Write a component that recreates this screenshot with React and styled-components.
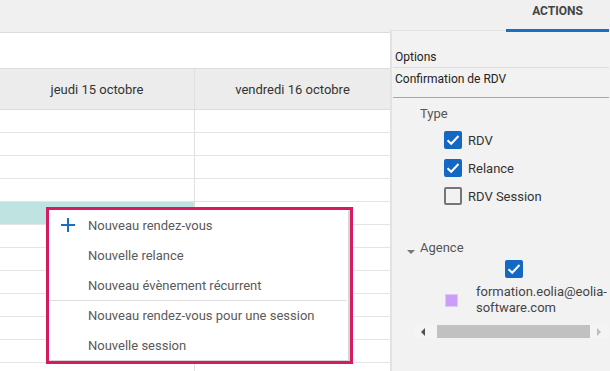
import React from "react";
import styled, { createGlobalStyle } from "styled-components";

const Global = createGlobalStyle`
  html, body { margin: 0; padding: 0; }
  body { width: 610px; height: 371px; overflow: hidden; background: #f2f2f2; font-family: Roboto, "Liberation Sans", Arial, sans-serif; }
  * { box-sizing: border-box; }
`;

const Page = styled.div`
  display: flex;
  width: 610px;
  height: 371px;
  overflow: hidden;
`;

const Calendar = styled.div`
  position: relative;
  width: 390px;
  flex: none;
  display: flex;
  flex-direction: column;
  background: #fff;
  overflow: hidden;
`;

const Toolbar = styled.div`
  height: 33px;
  flex: none;
  background: #f0f0f0;
  border-bottom: 1px solid #dcdcdc;
`;

const Spacer = styled.div`
  height: 35px;
  flex: none;
  background: #fff;
`;

const Row = styled.div`
  display: grid;
  grid-template-columns: 195px 195px;
  height: ${(p) => (p.$header ? "42px" : "23px")};
  flex: none;
  background: ${(p) => (p.$header ? "#ececec" : "#fff")};
  border-top: ${(p) => (p.$header ? "1px solid #dcdcdc" : "none")};
  border-bottom: 1px solid ${(p) => (p.$header ? "#dcdcdc" : "#e4e4e4")};
`;

const Cell = styled.div`
  display: flex;
  align-items: center;
  justify-content: center;
  font-size: 13px;
  color: #333;
  background: ${(p) => (p.$selected ? "#bfe3e0" : "transparent")};
  border-right: ${(p) => (p.$first ? "1px solid #e0e0e0" : "none")};
`;

const Menu = styled.div`
  position: absolute;
  left: 46px;
  top: 207px;
  width: 307px;
  height: 157px;
  border: 3px solid #d81b60;
  background: #fff;
  display: flex;
  flex-direction: column;
  box-shadow: inset -2px -1px 0 #d6d6d6;
`;

const MenuItem = styled.div`
  height: 30px;
  flex: none;
  display: flex;
  align-items: center;
  padding-left: 12px;
  gap: 13px;
  font-size: 13px;
  color: #5a5a5a;
  border-top: ${(p) => (p.$divided ? "1px solid #dedede" : "none")};
  margin-right: 3px;
`;

const IconSlot = styled.span`
  width: 14px;
  height: 14px;
  flex: none;
  display: flex;
`;

const Sidebar = styled.div`
  flex: 1;
  display: flex;
  flex-direction: column;
  background: #f2f2f2;
`;

const TabBar = styled.div`
  height: 31px;
  flex: none;
  display: flex;
  justify-content: flex-end;
  padding-right: 4px;
  border-bottom: 1px solid #e2e2e2;
  background: #f0f0f0;
`;

const Tab = styled.div`
  width: 103px;
  height: 32px;
  display: flex;
  justify-content: center;
  padding-top: 4px;
  font-size: 12px;
  font-weight: 700;
  color: #444;
  border-bottom: 3px solid #1a6fc4;
  margin-bottom: -1px;
`;

const Body = styled.div`
  flex: 1;
  border-left: 2px solid #e2e2e2;
  padding: 16px 4px 0 1px;
  display: flex;
  flex-direction: column;
`;

const OptionLine = styled.div`
  height: 21px;
  flex: none;
  display: flex;
  align-items: center;
  padding-left: 2px;
  font-size: 12px;
  color: #222;
  border-bottom: ${(p) => (p.$last ? "none" : "1px solid #dcdcdc")};
`;

const Rule = styled.div`
  margin-top: 8px;
  border-top: 1px solid #a8a8a8;
`;

const GroupTitle = styled.div`
  display: flex;
  align-items: center;
  gap: 5px;
  height: 16px;
  flex: none;
  margin-top: ${(p) => p.$mt}px;
  margin-bottom: ${(p) => p.$mb || 0}px;
  padding-left: ${(p) => p.$pl}px;
  font-size: 13px;
  color: #555;
`;

const Caret = styled.span`
  width: 0;
  height: 0;
  margin-top: 9px;
  border-left: 4px solid transparent;
  border-right: 4px solid transparent;
  border-top: 4px solid #777;
`;

const CheckRow = styled.div`
  height: 28px;
  flex: none;
  display: flex;
  align-items: center;
  gap: 6px;
  padding-left: ${(p) => p.$pl}px;
  font-size: 13px;
  color: #333;
`;

const Box = styled.span`
  width: 18px;
  height: 18px;
  flex: none;
  border-radius: 2px;
  display: flex;
  align-items: center;
  justify-content: center;
  background: ${(p) => (p.$checked ? "#1467c2" : "transparent")};
  border: ${(p) => (p.$checked ? "none" : "2px solid #767676")};
`;

const AgencyRow = styled.div`
  display: flex;
  align-items: center;
  padding-left: 52px;
  margin-top: 1px;
  gap: 18px;
`;

const Swatch = styled.span`
  width: 13px;
  height: 13px;
  flex: none;
  background: #cc9cf8;
  border: 1px solid #dcc7f5;
`;

const AgencyText = styled.div`
  font-size: 13px;
  line-height: 16px;
  color: #444;
  white-space: nowrap;
`;

const Scroll = styled.div`
  display: flex;
  align-items: center;
  height: 13px;
  flex: none;
  margin: 9px 0 0 21px;
  background: #f4f4f4;
`;

const Arrow = styled.span`
  width: 0;
  height: 0;
  margin: ${(p) => (p.$dir === "left" ? "0 12px 0 7px" : "0 8px 0 7px")};
  border-top: 4px solid transparent;
  border-bottom: 4px solid transparent;
  ${(p) =>
    p.$dir === "left"
      ? "border-right: 4px solid #505050;"
      : "border-left: 4px solid #bdbdbd;"}
`;

const Thumb = styled.span`
  width: 153px;
  height: 13px;
  background: #c1c1c1;
`;

const Check = () => (
  <svg width="14" height="12" viewBox="0 0 14 12">
    <path d="M1.5 6.2 L5.2 9.8 L12.5 2" fill="none" stroke="#fff" strokeWidth="2" />
  </svg>
);

const Plus = () => (
  <svg width="14" height="14" viewBox="0 0 14 14">
    <path d="M7 0 V14 M0 7 H14" stroke="#1a6fc4" strokeWidth="2" />
  </svg>
);

const CheckBox = ({ checked }) => <Box $checked={checked}>{checked && <Check />}</Box>;

const menuItems = [
  { label: "Nouveau rendez-vous", icon: true },
  { label: "Nouvelle relance" },
  { label: "Nouveau évènement récurrent" },
  { label: "Nouveau rendez-vous pour une session", divided: true },
  { label: "Nouvelle session" },
];

export default function App() {
  const rows = Array.from({ length: 12 }, (_, i) => i);
  return (
    <>
      <Global />
      <Page>
        <Calendar>
          <Toolbar />
          <Spacer />
          <Row $header>
            <Cell $first>jeudi 15 octobre</Cell>
            <Cell>vendredi 16 octobre</Cell>
          </Row>
          {rows.map((i) => (
            <Row key={i}>
              <Cell $first $selected={i === 4} />
              <Cell />
            </Row>
          ))}
          <Menu>
            {menuItems.map((m) => (
              <MenuItem key={m.label} $divided={m.divided}>
                <IconSlot>{m.icon && <Plus />}</IconSlot>
                {m.label}
              </MenuItem>
            ))}
          </Menu>
        </Calendar>
        <Sidebar>
          <TabBar>
            <Tab>ACTIONS</Tab>
          </TabBar>
          <Body>
            <OptionLine>Options</OptionLine>
            <OptionLine $last>Confirmation de RDV</OptionLine>
            <Rule />
            <GroupTitle $mt={7} $mb={5} $pl={27}>Type</GroupTitle>
            <CheckRow $pl={51}>
              <CheckBox checked />
              RDV
            </CheckRow>
            <CheckRow $pl={51}>
              <CheckBox checked />
              Relance
            </CheckRow>
            <CheckRow $pl={51}>
              <CheckBox />
              RDV Session
            </CheckRow>
            <GroupTitle $mt={29} $pl={14}>
              <Caret />
              Agence
            </GroupTitle>
            <CheckRow $pl={112}>
              <CheckBox checked />
            </CheckRow>
            <AgencyRow>
              <Swatch />
              <AgencyText>
                formation.eolia@eolia-
                <br />
                software.com
              </AgencyText>
            </AgencyRow>
            <Scroll>
              <Arrow $dir="left" />
              <Thumb />
              <Arrow $dir="right" />
            </Scroll>
          </Body>
        </Sidebar>
      </Page>
    </>
  );
}
